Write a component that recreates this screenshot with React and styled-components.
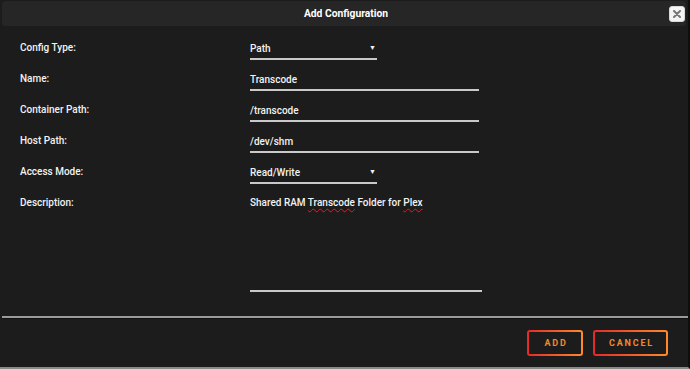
import React from "react";
import styled, { createGlobalStyle } from "styled-components";

const GlobalStyle = createGlobalStyle`
  html, body {
    margin: 0;
    padding: 0;
    background: #1c1c1c;
  }
  body {
    font-family: Roboto, 'Noto Sans', sans-serif;
  }
`

const Dialog = styled.div`
  width: 690px;
  height: 369px;
  box-sizing: border-box;
  background: #1c1c1c;
  border-right: 2px solid #0e0e0e;
  border-bottom: 2px solid #8a8a8a;
  display: flex;
  flex-direction: column;
`

const TitleBar = styled.div`
  margin: 1px 2px 0 2px;
  height: 25px;
  background: #262626;
  border-radius: 4px;
  display: flex;
  align-items: center;
  justify-content: center;
  position: relative;
`

const Title = styled.span`
  font-family: Roboto, sans-serif;
  font-weight: 700;
  font-size: 10.3px;
  color: #ffffff;
  margin-left: 4px;
`

const CloseButton = styled.button`
  position: absolute;
  right: 1px;
  top: 5px;
  width: 16px;
  height: 16px;
  padding: 0;
  border: 1px solid #d8d8d8;
  border-radius: 3px;
  background: #f4f4f4;
  display: flex;
  align-items: center;
  justify-content: center;
`

const Form = styled.div`
  display: grid;
  grid-template-columns: 230px 1fr;
  grid-auto-rows: 31px;
  padding: 12px 0 0 20px;
`

const Label = styled.span`
  font-size: 10px;
  font-weight: 500;
  color: #f2f2f2;
  line-height: 13px;
  padding-top: 3px;
`

const Field = styled.div`
  width: ${p => p.$width}px;
  height: 22px;
  box-sizing: border-box;
  border-bottom: 2px solid #c9c9c9;
  display: flex;
  align-items: center;
  justify-content: space-between;
  font-size: 10px;
  font-weight: 500;
  color: #f2f2f2;
`

const Arrow = styled.span`
  font-size: 7px;
  margin-right: 1px;
  color: #f2f2f2;
`

const TextArea = styled.div`
  grid-row: span 3;
  width: 232px;
  height: 99px;
  box-sizing: border-box;
  border-bottom: 2px solid #c9c9c9;
  font-size: 10px;
  font-weight: 500;
  line-height: 13px;
  padding-top: 3px;
  color: #f2f2f2;
`

const Misspelled = styled.span`
  text-decoration: underline wavy #e02020;
  text-decoration-thickness: 1px;
  text-underline-offset: 2px;
`

const Divider = styled.div`
  margin: auto 0 0 2px;
  height: 2px;
  background: #9a9a9a;
  border-bottom: 1px solid #111;
`

const Footer = styled.div`
  display: flex;
  justify-content: flex-end;
  gap: 10px;
  padding: 11px 20px 11px 0;
`

const ActionButton = styled.button`
  height: 26px;
  width: ${p => p.$width}px;
  box-sizing: border-box;
  border: 2px solid transparent;
  border-radius: 3px;
  background:
    linear-gradient(#1c1c1c, #1c1c1c) padding-box,
    linear-gradient(90deg, #e22a2a, #ff8a2c) border-box;
  color: #f08a2e;
  font-family: Roboto, sans-serif;
  font-weight: 700;
  font-size: 9px;
  letter-spacing: 1.8px;
  padding: 0 0 0 2px;
`

export default function App() {
    return (
        <>
            <GlobalStyle />
            <Dialog>
                <TitleBar>
                    <Title>Add Configuration</Title>
                    <CloseButton aria-label="close">
                        <svg width="8" height="8" viewBox="0 0 8 8">
                            <path d="M1 1 L7 7 M7 1 L1 7" stroke="#777" strokeWidth="2" strokeLinecap="round" />
                        </svg>
                    </CloseButton>
                </TitleBar>
                <Form>
                    <Label>Config Type:</Label>
                    <Field $width={127}>Path<Arrow>▼</Arrow></Field>
                    <Label>Name:</Label>
                    <Field $width={229}>Transcode</Field>
                    <Label>Container Path:</Label>
                    <Field $width={229}>/transcode</Field>
                    <Label>Host Path:</Label>
                    <Field $width={229}>/dev/shm</Field>
                    <Label>Access Mode:</Label>
                    <Field $width={127}>Read/Write<Arrow>▼</Arrow></Field>
                    <Label>Description:</Label>
                    <TextArea>
                        Shared RAM <Misspelled>Transcode</Misspelled> Folder for <Misspelled>Plex</Misspelled>
                    </TextArea>
                </Form>
                <Divider />
                <Footer>
                    <ActionButton $width={56}>ADD</ActionButton>
                    <ActionButton $width={75}>CANCEL</ActionButton>
                </Footer>
            </Dialog>
        </>
    );
}
